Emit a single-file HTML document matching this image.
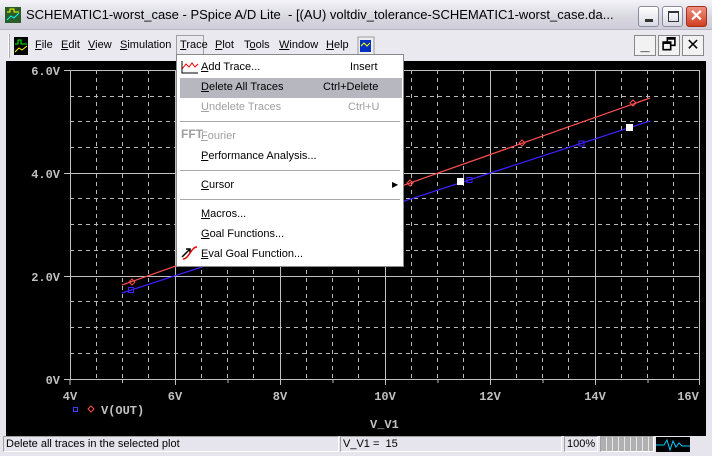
<!DOCTYPE html>
<html><head><meta charset="utf-8"><style>
*{margin:0;padding:0;box-sizing:border-box}
body{width:712px;height:456px;overflow:hidden;background:#e6e4ec;font-family:"Liberation Sans",sans-serif;font-size:11px;position:relative}
.abs{position:absolute}
.title{left:0;top:0;width:712px;height:30px;background:linear-gradient(#f4f4f8,#d8d7e0 60%,#cfcdd8);border-bottom:1px solid #b8b6c4}
.title span{position:absolute;left:26px;top:7px;width:608px;overflow:hidden;white-space:nowrap;font-size:13px;color:#000}
.tb{position:absolute;top:6px;width:21px;height:21px;border:1px solid #8a8aa0;border-radius:3px;background:linear-gradient(#fff,#d8d8e4)}
.menu{left:0;top:30px;width:712px;height:31px;background:#ebe9f0}
.mi{position:absolute;top:39px;font-size:11px}
.mdi{position:absolute;top:35px;width:22px;height:21px;border:1px solid #888;background:#f2f2f2;font-size:16px;text-align:center;line-height:19px}
.dd{left:176px;top:54px;width:228px;height:213px;background:#fff;border:1px solid #8a8a8a}
.dd div.it{position:absolute;left:24px;font-size:11px}
.dd div.sc{position:absolute;font-size:11px}
.sep{position:absolute;left:3px;width:220px;height:1px;background:#a8a8a8}
.status{left:0;top:436px;width:712px;height:20px;background:#e6e4ec}
.sp{position:absolute;top:436px;height:16px;border:1px solid #a0a0a0;border-color:#a0a0a0 #fff #fff #a0a0a0;font-size:11px;padding-left:2px;line-height:14px}
</style></head><body>
<div class="abs title"><svg style="position:absolute;left:5px;top:7px" width="16" height="16"><rect width="16" height="16" fill="#2a5c2a"/><path d="M2 5h3v-3h4v3h5" stroke="#ff0" fill="none"/><path d="M2 13l4-4 3 2 5-5" stroke="#0ff" fill="none"/></svg><span>SCHEMATIC1-worst_case - PSpice A/D Lite &nbsp;- [(AU) voltdiv_tolerance-SCHEMATIC1-worst_case.da...</span>
<div class="tb" style="left:638px"><div style="position:absolute;left:6px;top:12px;width:8px;height:3px;background:#333"></div></div>
<div class="tb" style="left:662px"><div style="position:absolute;left:5px;top:4px;width:11px;height:11px;border:1px solid #333;border-top-width:2px"></div></div>
<div class="tb" style="left:686px;background:linear-gradient(#f09080,#d04020);border-color:#a03020;color:#fff;font-size:16px;text-align:center;line-height:19px;font-weight:bold">✕</div>
</div>
<div class="abs menu"></div>
<div class="abs" style="left:8px;top:34px;width:2px;height:24px;border-left:1px solid #fff;border-right:1px solid #aaa"></div>
<svg class="abs" style="left:14px;top:37px" width="14" height="18"><rect width="14" height="18" fill="#000"/><path d="M1 7h3v-4h3v4h6" stroke="#0f0" fill="none"/><path d="M1 15l4-4 3 2 5-4" stroke="#ff0" fill="none"/></svg>
<div class="mi" style="left:35px"><u>F</u>ile</div>
<div class="mi" style="left:61px"><u>E</u>dit</div>
<div class="mi" style="left:88px"><u>V</u>iew</div>
<div class="mi" style="left:120px"><u>S</u>imulation</div>
<div class="abs" style="left:176px;top:35px;width:28px;height:20px;border:1px solid #a0a0a0;border-bottom:none"></div>
<div class="mi" style="left:180px"><u>T</u>race</div>
<div class="mi" style="left:215px"><u>P</u>lot</div>
<div class="mi" style="left:244px">T<u>o</u>ols</div>
<div class="mi" style="left:279px"><u>W</u>indow</div>
<div class="mi" style="left:326px"><u>H</u>elp</div>
<svg class="abs" style="left:357px;top:36px" width="18" height="20"><rect x="1" y="1" width="16" height="18" fill="#eee" stroke="#999"/><rect x="3" y="4" width="11" height="12" fill="#0030c0"/><path d="M4 10l3-3 3 3 3-3" stroke="#ff0" fill="none"/></svg>
<div class="mdi" style="left:634px;font-weight:bold">_</div>
<div class="mdi" style="left:658px">🗗</div>
<div class="mdi" style="left:682px">✕</div>

<svg class="abs" style="left:0;top:0" width="712" height="456">
<rect x="6" y="61" width="700" height="375" fill="#000"/>
<g stroke="#b8b8b8" stroke-width="1" stroke-dasharray="4,4" shape-rendering="crispEdges">
<path d="M96.5 70V379M122.5 70V379M148.5 70V379M201.5 70V379M227.5 70V379M253.5 70V379M306.5 70V379M332.5 70V379M358.5 70V379M411.5 70V379M437.5 70V379M463.5 70V379M516.5 70V379M542.5 70V379M568.5 70V379M621.5 70V379M647.5 70V379M673.5 70V379"/>
<path d="M70 96.5H700M70 121.5H700M70 147.5H700M70 198.5H700M70 224.5H700M70 250.5H700M70 301.5H700M70 327.5H700M70 353.5H700"/>
</g>
<g stroke="#c0c0c0" stroke-width="1" shape-rendering="crispEdges" fill="none">
<path d="M70.5 70V379M175.5 70V379M280.5 70V379M385.5 70V379M490.5 70V379M595.5 70V379M699.5 70V379"/>
<path d="M64 70.5H700M64 173.5H700M64 276.5H700M64 379.5H700"/>
<path d="M70 379v6M122.5 379v4M175.5 379v6M228 379v4M280.5 379v6M333 379v4M385.5 379v6M438 379v4M490.5 379v6M543 379v4M595.5 379v6M648 379v4M699.5 379v6"/>
</g>
<g fill="#c0c0c0" font-family="Liberation Mono,monospace" font-weight="bold" font-size="12">
<text x="60" y="75" text-anchor="end">6.0V</text>
<text x="60" y="178" text-anchor="end">4.0V</text>
<text x="60" y="281" text-anchor="end">2.0V</text>
<text x="60" y="384" text-anchor="end">0V</text>
<text x="70" y="400" text-anchor="middle">4V</text>
<text x="175" y="400" text-anchor="middle">6V</text>
<text x="280" y="400" text-anchor="middle">8V</text>
<text x="385" y="400" text-anchor="middle">10V</text>
<text x="490" y="400" text-anchor="middle">12V</text>
<text x="595" y="400" text-anchor="middle">14V</text>
<text x="688" y="400" text-anchor="middle">16V</text>
<text x="101" y="414">V(OUT)</text>
<text x="370" y="428">V_V1</text>
</g>
<rect x="73.5" y="407.5" width="4" height="4" fill="none" stroke="#4040ff"/>
<path d="M91 406l3 3-3 3-3-3z" fill="none" stroke="#ff5050"/>
<path d="M122 285L650 98" stroke="#ff5050" stroke-width="1.2"/>
<path d="M122 293L650 121" stroke="#4020ff" stroke-width="1.2"/>
<g fill="none" stroke="#ff5050"><path d="M410 180l3 3-3 3-3-3zM522 140l3 3-3 3-3-3zM633 100l3 3-3 3-3-3zM132 279l3 3-3 3-3-3z"/></g>
<g fill="none" stroke="#4020ff"><rect x="128.5" y="287.5" width="5" height="5"/><rect x="467" y="177.5" width="5" height="5"/><rect x="579" y="141" width="5" height="5"/></g>
<rect x="457" y="178" width="7" height="7" fill="#fff"/><rect x="626" y="124" width="7" height="7" fill="#fff"/>
</svg>

<div class="abs dd">
<svg style="position:absolute;left:4px;top:5px" width="18" height="14"><path d="M1 9l4-5 3 3 3-4 3 4 3-3" stroke="#e00" fill="none"/><path d="M1 1v12h16" stroke="#000" fill="none"/></svg>
<div class="it" style="top:6px"><u>A</u>dd Trace...</div><div class="sc" style="left:173px;top:6px">Insert</div>
<div style="position:absolute;left:3px;top:23px;width:222px;height:20px;background:#b6b7bf"></div>
<div class="it" style="top:26px"><u>D</u>elete All Traces</div><div class="sc" style="left:146px;top:26px">Ctrl+Delete</div>
<div class="it" style="top:46px;color:#a0a0a0"><u>U</u>ndelete Traces</div><div class="sc" style="left:171px;top:46px;color:#a0a0a0">Ctrl+U</div>
<div class="sep" style="top:66px"></div>
<div style="position:absolute;left:4px;top:72px;font-size:12px;font-weight:bold;color:#a0a0a0">FFT</div>
<div class="it" style="top:75px;color:#a0a0a0"><u>F</u>ourier</div>
<div class="it" style="top:95px"><u>P</u>erformance Analysis...</div>
<div class="sep" style="top:115px"></div>
<div class="it" style="top:124px"><u>C</u>ursor</div><div style="position:absolute;left:215px;top:125px;font-size:8px">▶</div>
<div class="sep" style="top:144px"></div>
<div class="it" style="top:153px"><u>M</u>acros...</div>
<div class="it" style="top:173px"><u>G</u>oal Functions...</div>
<svg style="position:absolute;left:3px;top:190px" width="20" height="16"><path d="M2 12l8-8M6 4h4v4" stroke="#000" fill="none" stroke-width="1.5"/><path d="M3 14c6 0 8-12 14-12" stroke="#e00" fill="none" stroke-width="1.5"/></svg>
<div class="it" style="top:193px"><u>E</u>val Goal Function...</div>
</div>

<div class="abs status"></div>
<div class="sp" style="left:3px;width:336px">Delete all traces in the selected plot</div>
<div class="sp" style="left:340px;width:222px">V_V1 = &nbsp;15</div>
<div class="sp" style="left:564px;width:34px">100%</div>
<div class="sp" style="left:600px;width:54px;background:repeating-linear-gradient(90deg,#b0b0b0 0 5px,#e6e4ec 5px 6px)"></div>
<svg class="abs" style="left:656px;top:437px" width="34" height="15"><rect width="34" height="15" fill="#000"/><path d="M0 8h8l3-5 3 10 3-9 3 6 3-4 3 3h8" stroke="#0cf" fill="none"/></svg>
</body></html>
